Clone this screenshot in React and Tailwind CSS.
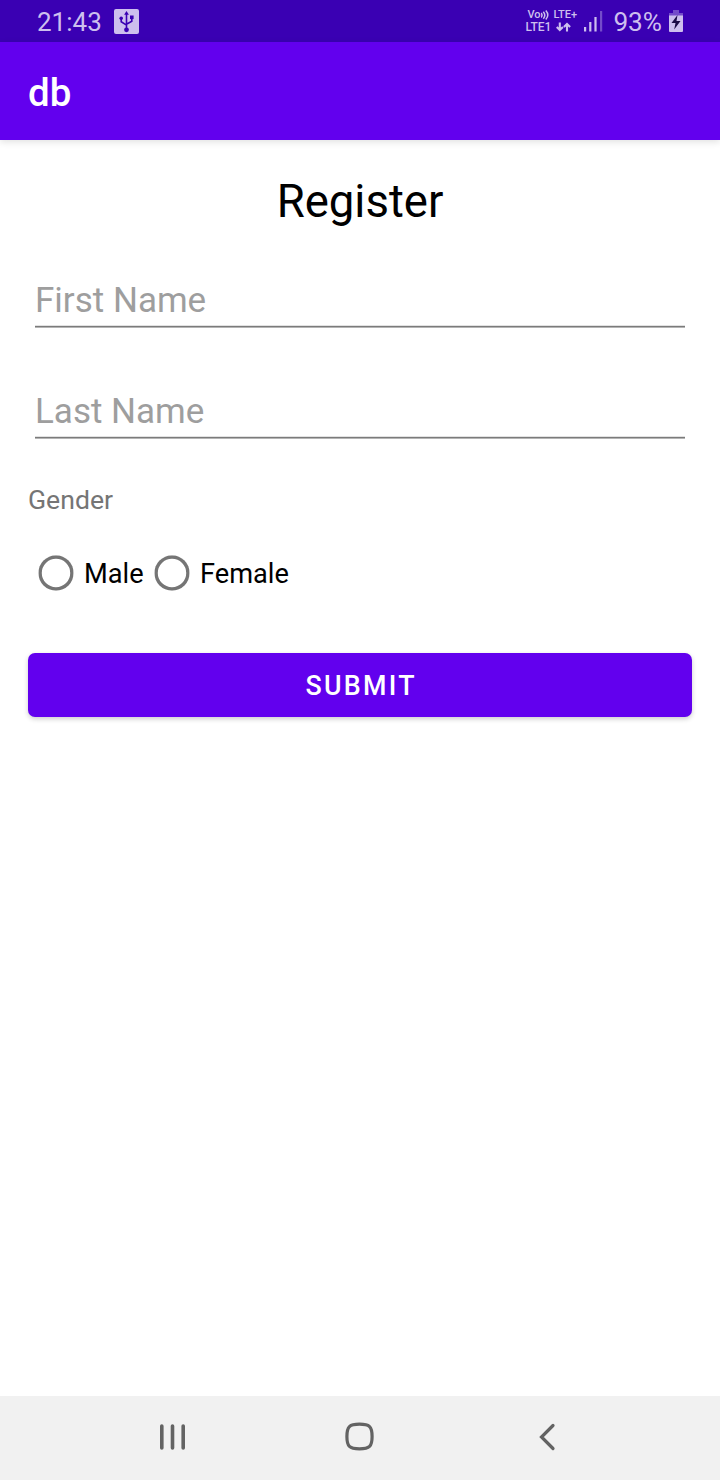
import React from "react";

function UsbBadge() {
  return (
    <svg className="ml-[12px] h-[25px] w-[25px]" viewBox="0 0 25 25" fill="none">
      <rect width="25" height="25" rx="2" fill="#cdbfee" />
      <g stroke="#3a00b3" strokeWidth="1.6">
        <path d="M12.5 4v17M7.2 9.5v3.2l5.3 3.4M17.8 9v3.2l-5.3 3" />
      </g>
      <g fill="#3a00b3">
        <path d="M12.5 2l2.4 3.8h-4.8z" />
        <circle cx="7.2" cy="9.3" r="1.8" />
        <rect x="16" y="6.5" width="3.6" height="3.6" />
        <circle cx="12.5" cy="20.8" r="2.4" />
      </g>
    </svg>
  );
}

function NetworkLabel() {
  return (
    <div className="flex w-[55px] flex-col text-[11px] leading-[12px] font-medium text-[#cdbfee]">
      <div className="flex h-[12px] items-center pl-[2px]">
        <span className="w-[14px]">Vo</span>
        <svg className="h-[10px] w-[8px]" viewBox="0 0 8 10" fill="none" stroke="#cdbfee" strokeWidth="1.5">
          <path d="M0 3q2 2.200 0 4.400M2.300 1.700q3 3.500 0 7M4.800 .5q4 4.500 0 9" />
        </svg>
        <span className="ml-[4px] whitespace-nowrap">LTE+</span>
      </div>
      <div className="flex h-[12px] items-center">
        <span className="w-[27px] text-[12px]">LTE1</span>
        <svg className="ml-[4px] h-[10px] w-[15px]" viewBox="0 0 15 10" fill="none" stroke="#cdbfee" strokeWidth="2.100">
          <path d="M3.800 .5v8M.7 5L3.800 8.100 6.900 5M11 9.500v-8M7.900 5L11 1.900 14.100 5" />
        </svg>
      </div>
    </div>
  );
}

function Signal() {
  return (
    <svg className="ml-[4px] h-[21px] w-[19px]" viewBox="0 0 19 21" fill="#cdbfee">
      <rect x="0" y="16" width="2.200" height="4.500" />
      <rect x="5.200" y="11" width="2.200" height="9.500" />
      <rect x="10.400" y="6" width="2.200" height="14.500" />
      <rect x="16" y="0" width="2.200" height="20.500" opacity=".4" />
    </svg>
  );
}

function Battery() {
  return (
    <svg className="ml-[7px] h-[22px] w-[14px]" viewBox="0 0 14 22">
      <path d="M4 0h6v3h4v3H0V3h4z" fill="#cdbfee" opacity=".4" />
      <path d="M0 5.500h14V21a1 1 0 0 1-1 1H1a1 1 0 0 1-1-1z" fill="#cdbfee" />
      <path d="M8.500 5L2.500 13h4L5.200 19.500 11.500 11H7.500z" fill="#1b0b45" />
    </svg>
  );
}

function StatusBar() {
  return (
    <div className="flex h-[42px] items-center justify-between bg-[#3a00b3] pr-[37px] pl-[37px] text-[#cdbfee]">
      <div className="flex items-center">
        <span className="pt-[2px] text-[26px] leading-[40px]">21:43</span>
        <UsbBadge />
      </div>
      <div className="flex items-center">
        <NetworkLabel />
        <Signal />
        <span className="ml-[10px] pt-[2px] text-[26.2px] leading-[40px]">93%</span>
        <Battery />
      </div>
    </div>
  );
}

function Field({ label, className }) {
  return (
    <input
      type="text"
      placeholder={label}
      aria-label={label}
      className={"mx-[7px] block h-[48px] pb-[8px] text-[35px] leading-[40px] text-black shadow-[inset_0_-1px_0_#b4b4b4,inset_0_-2px_0_#7b7b7b,inset_0_-3px_0_#e2e2e2] outline-none placeholder:text-[#9e9e9e] " + className}
    />
  );
}

function RadioOption({ label, className }) {
  return (
    <label className={"flex items-center " + className}>
      <input
        type="radio"
        name="gender"
        className="h-[36px] w-[36px] scale-[0.98] appearance-none rounded-full shadow-[inset_0_0_0_3.5px_#757575] checked:shadow-[inset_0_0_0_3.5px_#6200ee]"
      />
      <span className="ml-[10px] pt-[2px] text-[27.2px] leading-[32px] text-black">{label}</span>
    </label>
  );
}

function NavBar() {
  return (
    <nav className="flex h-[84px] items-center bg-[#f1f1f1] pb-[3px] pl-[158px]">
      <svg className="h-[32px] w-[30px]" viewBox="0 0 30 32" fill="none" stroke="#636363" strokeWidth="3.600" strokeLinecap="round">
        <path d="M3.800 5v22M14.500 5v22M25.200 5v22" />
      </svg>
      <svg className="ml-[156px] h-[32px] w-[32px]" viewBox="0 0 32 32" fill="none" stroke="#636363" strokeWidth="3.200">
        <path d="M15.500 3.200C25.500 3.200 28.100 5.500 28.100 15.500S25.500 27.800 15.500 27.800 2.900 25.500 2.900 15.500 5.500 3.200 15.500 3.200z" />
      </svg>
      <svg className="ml-[162px] h-[32px] w-[20px]" viewBox="0 0 20 32" fill="none" stroke="#636363" strokeWidth="3.200" strokeLinecap="round">
        <path d="M15 4.500L3.500 16 15 27.500" />
      </svg>
    </nav>
  );
}

export default function App() {
  return (
    <div className="flex h-[1480px] w-[720px] flex-col bg-white font-['Roboto',sans-serif]">
      <StatusBar />
      <header className="flex h-[98px] items-center bg-[#6200ee] px-7 pt-[4px] shadow-[0_2px_7px_rgba(0,0,0,0.12)]">
        <h1 className="text-[38.5px] leading-[46px] font-medium text-white">db</h1>
      </header>
      <main className="flex flex-1 flex-col px-7 pt-[35px]">
        <h2 className="text-center text-[45.5px] leading-[54px] text-black">Register</h2>
        <Field label="First Name" className="mt-[51px]" />
        <Field label="Last Name" className="mt-[63px]" />
        <p className="mt-[45px] text-[26.6px] leading-[32px] text-[#757575]">Gender</p>
        <div className="mt-[39px] flex h-[36px] items-center pl-[10px]">
          <RadioOption label="Male" className="w-[116px]" />
          <RadioOption label="Female" className="" />
        </div>
        <button className="mt-[62px] h-[64px] rounded-[7px] bg-[#6200ee] pt-[2px] pl-[2.4px] text-[26.8px] leading-[32px] font-medium tracking-[2.3px] text-white shadow-[0_2px_5px_rgba(0,0,0,0.2)]">
          SUBMIT
        </button>
      </main>
      <NavBar />
    </div>
  );
}
